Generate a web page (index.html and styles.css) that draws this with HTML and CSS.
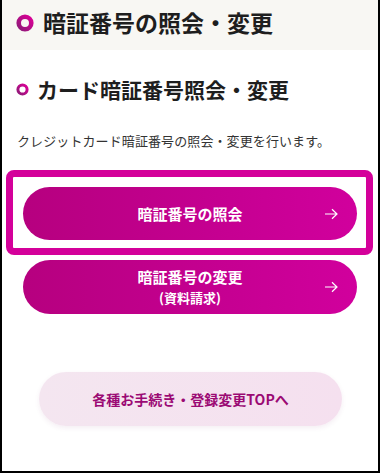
FILE: index.html
```html
<!DOCTYPE html>
<html lang="ja">
<head>
<meta charset="utf-8">
<link rel="stylesheet" href="styles.css">
</head>
<body>
<div class="frame">
  <header class="page-head">
    <svg class="ring ring-lg" viewBox="0 0 18 18" aria-hidden="true">
      <defs>
        <linearGradient id="g1" x1="0" y1="1" x2="1" y2="0">
          <stop offset="0" stop-color="#8e1a78"/>
          <stop offset="1" stop-color="#dc0096"/>
        </linearGradient>
      </defs>
      <circle cx="9" cy="9" r="6.3" fill="none" stroke="url(#g1)" stroke-width="4.6"/>
    </svg>
    <h1 class="page-title">暗証番号の照会・変更</h1>
  </header>

  <main class="content">
    <h2 class="sec-title">
      <svg class="ring ring-sm" viewBox="0 0 13 13" aria-hidden="true">
        <defs>
          <linearGradient id="g2" x1="0" y1="1" x2="1" y2="0">
            <stop offset="0" stop-color="#8e1a78"/>
            <stop offset="1" stop-color="#dc0096"/>
          </linearGradient>
        </defs>
        <circle cx="6.5" cy="6.5" r="4.6" fill="none" stroke="url(#g2)" stroke-width="3"/>
      </svg>
      <span>カード暗証番号照会・変更</span>
    </h2>
    <p class="desc">クレジットカード暗証番号の照会・変更を行います。</p>

    <div class="focus-box">
      <a class="btn btn-primary" href="#">
        <span class="btn-label">暗証番号の照会</span>
        <svg class="arrow" viewBox="0 0 14 12" aria-hidden="true"><path d="M1 6H13M8 1.2L13 6L8 10.8" fill="none" stroke="#fff" stroke-width="1.2"/></svg>
      </a>
    </div>

    <a class="btn btn-primary btn-second" href="#">
      <span class="btn-label">暗証番号の変更<br><span class="sub">(資料請求)</span></span>
      <svg class="arrow" viewBox="0 0 14 12" aria-hidden="true"><path d="M1 6H13M8 1.2L13 6L8 10.8" fill="none" stroke="#fff" stroke-width="1.2"/></svg>
    </a>

    <a class="btn btn-light" href="#">各種お手続き・登録変更TOPへ</a>
  </main>
</div>
</body>
</html>
```

FILE: styles.css
```css
* { box-sizing: border-box; }
html, body {
  margin: 0;
  padding: 0;
  background: #fff;
}
body {
  font-family: "Noto Sans CJK JP", "Noto Sans", sans-serif;
  color: #222;
}
.frame {
  width: 380px;
  height: 473px;
  border-left: 2px solid #000;
  border-right: 2px solid #000;
  border-bottom: 2px solid #000;
  overflow: hidden;
}
.page-head {
  height: 50px;
  background: #f8f7f3;
  display: flex;
  align-items: center;
  padding: 0 0 5px 14px;
  gap: 9px;
}
.ring { display: block; flex: none; }
.ring-lg { width: 18px; height: 18px; }
.ring-sm { width: 13px; height: 13px; }
.page-title {
  margin: 0;
  font-size: 23px;
  font-weight: 700;
  line-height: 1;
  color: #1e1e1e;
}
.content {
  padding: 26px 0 0 0;
  display: flex;
  flex-direction: column;
}
.sec-title {
  margin: 0 0 0 14px;
  display: flex;
  align-items: center;
  gap: 8px;
  font-size: 21px;
  font-weight: 700;
  line-height: 26px;
  color: #1e1e1e;
}
.desc {
  margin: 31px 0 0 15px;
  font-size: 13px;
  line-height: 16px;
  letter-spacing: 0.1px;
  color: #333;
}
.focus-box {
  margin: 21px 0 0 4px;
  width: 367px;
  border: 7px solid #d4009a;
  border-radius: 8px;
  padding: 10px 9px 8px 10px;
}
.btn {
  display: flex;
  align-items: center;
  justify-content: center;
  text-decoration: none;
  border-radius: 999px;
  position: relative;
  font-weight: 700;
}
.btn-primary {
  height: 53px;
  width: 334px;
  background: linear-gradient(90deg, #b6007f 0%, #c40090 55%, #d1009d 100%);
  color: #fff;
  font-size: 15px;
}
.btn-label {
  text-align: center;
  line-height: 20px;
}
.btn-label .sub {
  font-size: 13px;
}
.arrow {
  position: absolute;
  right: 19px;
  top: 50%;
  width: 14px;
  height: 12px;
  margin-top: -6px;
}
.btn-second {
  margin: 5px 0 0 21px;
  height: 54px;
}
.btn-light {
  margin: 58px 0 0 37px;
  width: 303px;
  height: 54px;
  background: linear-gradient(90deg, #f4e6f0 0%, #f5e0ef 100%);
  color: #9b0a74;
  font-size: 14px;
  box-shadow: 0 2px 5px rgba(120, 40, 100, 0.08);
}
```
